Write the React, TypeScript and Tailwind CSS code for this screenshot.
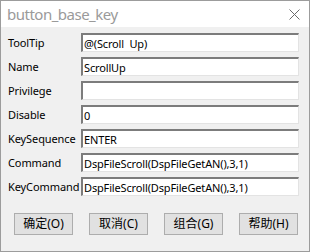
import React from 'react'

const fields = [
  { label: 'ToolTip', value: '@(Scroll  Up)' },
  { label: 'Name', value: 'ScrollUp' },
  { label: 'Privilege', value: '' },
  { label: 'Disable', value: '0' },
  { label: 'KeySequence', value: 'ENTER' },
  { label: 'Command', value: 'DspFileScroll(DspFileGetAN(),3,1)' },
  { label: 'KeyCommand', value: 'DspFileScroll(DspFileGetAN(),3,1)' },
]

const buttons = ['确定(O)', '取消(C)', '组合(G)', '帮助(H)']

export default function App() {
  return (
    <div className="w-[310px] h-[252px] bg-[#f0f0f0] border border-[#9c9c9c] flex flex-col font-['Noto_Sans','Noto_Sans_CJK_SC',sans-serif] text-black">
      {/* title bar */}
      <div className="h-[26px] bg-white flex items-center justify-between pl-[6px] pr-[9px] shrink-0">
        <span className="text-[15px] leading-none text-[#9a9a9a] whitespace-pre tracking-[-0.5px]">button_base_key</span>
        <svg width="11" height="11" viewBox="0 0 11 11">
          <path d="M0.5 0.5L10.5 10.5M10.5 0.5L0.5 10.5" stroke="#6a6a6a" strokeWidth="1" fill="none" />
        </svg>
      </div>

      {/* fields */}
      <div className="flex flex-col gap-[5px] pt-[6px]">
        {fields.map((f) => (
          <div key={f.label} className="flex items-center h-[19px]">
            <span className="w-[80px] pl-[7px] text-[11px] leading-none tracking-[-0.1px]">{f.label}</span>
            <div className="w-[218px] h-[19px] bg-white border-t-2 border-l-2 border-t-[#7c7c7c] border-l-[#7c7c7c] border-r border-b border-r-[#e3e3e3] border-b-[#e3e3e3] flex items-center pl-[1px]">
              <span className="text-[11px] leading-none whitespace-pre tracking-[-0.15px]">{f.value}</span>
            </div>
          </div>
        ))}
      </div>

      {/* buttons */}
      <div className="flex gap-[16px] pl-[13px] mt-[17px]">
        {buttons.map((b) => (
          <button
            key={b}
            className="w-[59px] h-[22px] bg-[#e1e1e1] border border-[#adadad] text-[12px] leading-none flex items-center justify-center"
          >
            {b}
          </button>
        ))}
      </div>
    </div>
  )
}
